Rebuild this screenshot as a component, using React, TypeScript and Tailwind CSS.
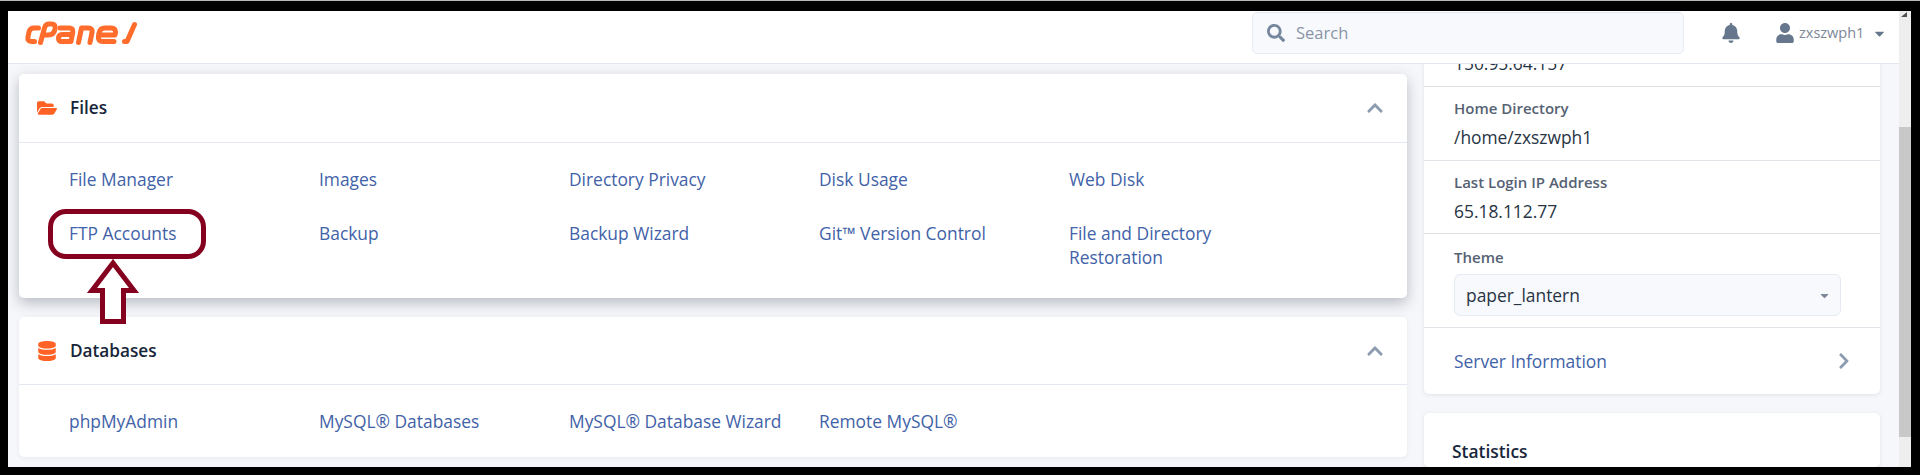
import React from "react";
import { FaBell, FaCaretDown, FaChevronRight, FaChevronUp, FaDatabase, FaFolderOpen, FaSearch, FaUser } from "react-icons/fa";

function Logo() {
  return (
    <svg width="114" height="27" viewBox="0 0 114 27" fill="none" stroke="#ff6c2c" strokeWidth="5" strokeLinecap="round" strokeLinejoin="round" className="block">
      <path d="M14.500 8H10Q6 8 5 12L4 17Q3 21.500 8 21.500H10.500" />
      <path d="M16.500 22.500L20.500 8Q21.500 4 25 4H27.500Q32 4 31 9Q30 15 24 15H21" />
      <path d="M36 8H45Q49.500 8 48.800 12L47 21.500H38Q34 21.500 34.500 17.500Q35 14.500 39 14.500H48" />
      <path d="M54.500 22.500L57.500 8H64Q69 8 68 12.500L66 22.500" />
      <path d="M76 15H91Q93 8 87 8H81Q76 8 75 13L74.500 16Q73.500 21.500 79 21.500H90" />
      <path d="M110.500 4.500L103 21.500H100.500" />
    </svg>
  );
}

function Card({ icon, title, hovered, children }: { icon: React.ReactNode; title: string; hovered?: boolean; children: React.ReactNode }) {
  return (
    <section className={`bg-white rounded-[5px] ${hovered ? "shadow-[0_5px_14px_rgba(40,50,70,0.3)]" : "shadow-[0_1px_4px_rgba(60,70,90,0.08)]"}`}>
      <header className={`${hovered ? "h-[69px]" : "h-[68px]"} flex items-center border-b border-[#e4e9f1] pl-[18px] pr-[23px]`}>
        <span className="w-[33px] text-[#ff6224] text-[20px]">{icon}</span>
        <h2 className="flex-1 text-[17.2px] font-semibold text-[#17263a]">{title}</h2>
        <FaChevronUp className="text-[#8d9bb0] text-[18px]" />
      </header>
      {children}
    </section>
  );
}

function Links({ items, className }: { items: string[]; className: string }) {
  return (
    <div className={`grid grid-cols-[250px_250px_250px_250px_250px] gap-y-[30px] pl-[50px] ${className}`}>
      {items.map((t) => (
        <a key={t} className="text-[17.4px] leading-[24px] text-[#3f62a8] pr-[20px]">{t}</a>
      ))}
    </div>
  );
}

function Info({ label, value, last }: { label: string; value: string; last?: boolean }) {
  return (
    <div className={`${last ? "h-[73px]" : "h-[74px]"} border-b border-[#e0e3e8] pl-[30px] pt-[11px]`}>
      <div className="text-[15px] leading-[20px] font-semibold text-[#566273]">{label}</div>
      <div className="text-[17.4px] leading-[24px] text-[#273444] mt-[7px]">{value}</div>
    </div>
  );
}

export default function App() {
  return (
    <div className="h-[475px] w-[1920px] bg-black overflow-hidden pt-[10px] pl-[8px] pr-[9px] pb-[8px] border-t border-[#b8b8b8] relative font-['Open_Sans',sans-serif]">
      <div className="h-full flex">
        <div className="w-[1891px] h-full flex flex-col bg-[#f6f7fa]">
          <nav className="h-[53px] shrink-0 bg-white border-b border-[#e3e8f0] flex items-center pb-[8px] relative z-10">
            <div className="ml-[16px] w-[1228px]"><Logo /></div>
            <div className="w-[432px] h-[42px] rounded-[5px] bg-[#f7f9fc] border border-[#e6eaf2] flex items-center pl-[14px] text-[16.5px] text-[#8a94a6]">
              <FaSearch className="text-[#75869d] text-[18px] mr-[11px]" />
              Search
            </div>
            <FaBell className="ml-[37px] text-[#66778d] text-[20px]" />
            <FaUser className="ml-[34px] text-[#66778d] text-[20px]" />
            <span className="ml-[4px] text-[14.5px] text-[#7d8797]">zxszwph1</span>
            <FaCaretDown className="ml-[8px] text-[#66778d] text-[15px]" />
          </nav>
          <main className="flex-1 min-h-0 overflow-hidden flex pl-[11px] pt-[10px]">
            <div className="w-[1388px] flex flex-col gap-[19px]">
              <Card hovered icon={<FaFolderOpen />} title="Files">
                <Links className="pt-[24px] pb-[29px]" items={["File Manager", "Images", "Directory Privacy", "Disk Usage", "Web Disk", "FTP Accounts", "Backup", "Backup Wizard", "Git™ Version Control", "File and Directory Restoration"]} />
              </Card>
              <Card icon={<FaDatabase />} title="Databases">
                <Links className="pt-[24px] pb-[24px]" items={["phpMyAdmin", "MySQL® Databases", "MySQL® Database Wizard", "Remote MySQL®"]} />
              </Card>
            </div>
            <aside className="ml-[17px] w-[456px] mt-[-19px] flex flex-col gap-[19px]">
              <div className="bg-white rounded-[5px] shadow-[0_1px_4px_rgba(60,70,90,0.12)]">
                <div className="h-[32px] flex flex-col border-b border-[#e0e3e8] pl-[30px] text-[17.4px] leading-[24px] text-[#273444]">
                  <div className="-mt-[4px]">150.95.64.157</div>
                </div>
                <Info label="Home Directory" value="/home/zxszwph1" />
                <Info last label="Last Login IP Address" value="65.18.112.77" />
                <div className="h-[94px] border-b border-[#e0e3e8] pl-[30px] pt-[13px]">
                  <div className="text-[15px] leading-[20px] font-semibold text-[#566273]">Theme</div>
                  <div className="mt-[7px] w-[387px] h-[42px] rounded-[6px] bg-[#f7f9fc] border border-[#e6eaf2] flex items-center justify-between pl-[11px] pr-[9px] text-[17.4px] text-[#273444]">
                    paper_lantern
                    <FaCaretDown className="text-[#7d8797] text-[13px]" />
                  </div>
                </div>
                <div className="h-[66px] flex items-center justify-between pl-[30px] pr-[27px] text-[17.4px] text-[#3f62a8]">
                  Server Information
                  <FaChevronRight className="text-[#8d9bb0] text-[18px]" />
                </div>
              </div>
              <div className="bg-white rounded-[5px] shadow-[0_1px_4px_rgba(60,70,90,0.12)] h-[120px] pl-[28px] pt-[25px] text-[17.4px] font-semibold text-[#17263a]">
                Statistics
              </div>
            </aside>
          </main>
        </div>
        <div className="w-[12px] h-full bg-[#eeeeee] relative">
          <svg width="8" height="6" viewBox="0 0 8 6" className="absolute left-[2px] top-[1px]"><path d="M0 5L6 0V5Z" fill="#505050" /></svg>
          <div className="h-[116px]" />
          <div className="h-[310px] bg-[#c8c8c8]" />
        </div>
      </div>
      <div className="absolute left-[48px] top-[208px] w-[158px] h-[50px] rounded-[18px] border-[5px] border-[#85001f]" />
      <svg width="54" height="66" viewBox="0 0 54 66" className="absolute left-[86px] top-[258px]" fill="#ffffff" stroke="#85001f" strokeWidth="5">
        <path d="M27 4L6 31.500H16.500V62.500H37.500V31.500H48Z" />
      </svg>
    </div>
  );
}
